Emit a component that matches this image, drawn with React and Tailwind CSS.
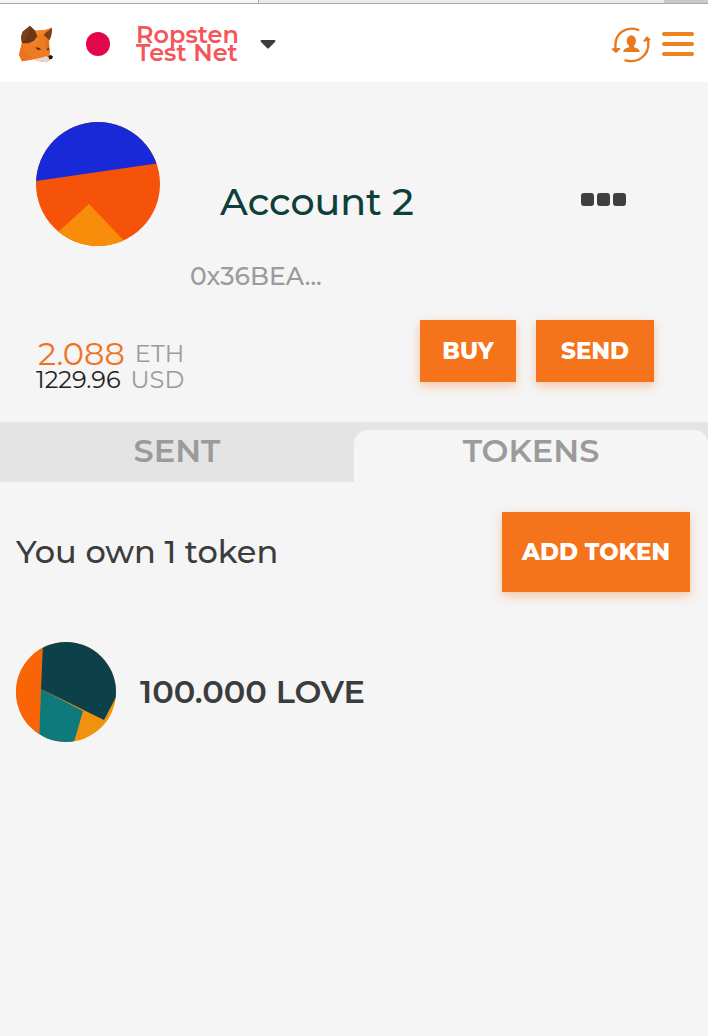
import React from "react";

const FoxLogo = () => (
  <svg viewBox="0 0 126 132" className="h-11 w-[42px]" aria-hidden="true">
    <path d="M42 12 L56 26 L88 24 L108 17 L107 34 L101 52 L98 64 L101 96 L105 110 L92 121 L70 118 L52 112 L18 118 L9 98 L18 62 Z" fill="#ee7b20" />
    <path d="M18 62 L9 98 L18 118 L52 112 L38 98 L22 82 Z" fill="#ea731d" />
    <path d="M56 26 L88 24 L82 38 L64 42 Z" fill="#f28429" />
    <path d="M38 62 L62 46 L74 60 L58 76 Z" fill="#f08025" />
    <path d="M42 11 L56 25 L64 43 L54 56 L38 64 L18 64 L15 46 L20 29 Z" fill="#6a3614" />
    <path d="M42 11 L38 36 L18 64 L15 46 L20 29 Z" fill="#784118" />
    <path d="M108 17 L95 25 L83 39 L100 55 L105 44 L107 33 Z" fill="#7c3e18" />
    <path d="M108 17 L88 24 L84 36 L97 27 Z" fill="#e2742a" />
    <path d="M88 54 L99 60 L102 95 L91 82 Z" fill="#e26c1d" />
    <path d="M59 75 L72 79 L75 84 L63 83 Z" fill="#5a3018" />
    <path d="M92 81 L99 77 L99 83 L94 85 Z" fill="#5a3018" />
    <path d="M52 112 L72 108 L90 103 L103 109 L92 121 L70 118 Z" fill="#e3d9d2" />
    <path d="M97 103 L104 99 L111 103 L108 111 L100 112 Z" fill="#191919" />
  </svg>
);

const SwitchAccountIcon = () => (
  <svg viewBox="0 0 138 126" className="h-[42px] w-[46px]" fill="none" aria-hidden="true">
    <g stroke="#e8791f" strokeWidth="7" strokeLinecap="round">
      <path d="M91 21 C57 8 22 29 22 68 L23 78" />
      <path d="M52 112 C88 122 124 99 121 57 L119 50" />
    </g>
    <g fill="#e8791f" stroke="#e8791f" strokeWidth="4" strokeLinejoin="round">
      <path d="M13 78 L35 77 L24 88 Z" />
      <path d="M108 54 L116 42 L126 50 Z" />
    </g>
    <g fill="#e8791f">
      <ellipse cx="70" cy="54" rx="14" ry="17" />
      <path d="M63 64 H78 V73 C86 76 95 77 95 87 H46 C46 77 55 76 63 73 Z" />
    </g>
  </svg>
);

const AccountIdenticon = () => (
  <svg viewBox="0 0 124 124" className="size-[124px] shrink-0 rounded-full" aria-hidden="true">
    <rect width="124" height="124" fill="#f6530a" />
    <path d="M0 0 H124 V41 L0 59 Z" fill="#1829d8" />
    <path d="M53 82 L10 121 V124 H93 Z" fill="#f78d09" />
  </svg>
);

const TokenIdenticon = () => (
  <svg viewBox="0 0 100 100" className="size-[100px] shrink-0 rounded-full" aria-hidden="true">
    <rect width="100" height="100" fill="#f0920d" />
    <path d="M0 0 H27 L23 100 H0 Z" fill="#f96506" />
    <path d="M25 47 L67 69 L58 100 H23 Z" fill="#0f7a7b" />
    <path d="M27 0 H100 V55 L88 78 L25 47 Z" fill="#0c414b" />
  </svg>
);

const buttonStyle =
  "bg-[#f5731b] text-[23px] font-extrabold text-white shadow-[0_4px_10px_rgba(247,115,27,0.36)]";

const App = () => {
  return (
    <div className="min-h-screen bg-[#f5f5f5] font-['Montserrat','Inter',sans-serif] text-[#3b3c3c]">
      {/* Window edge */}
      <div className="flex h-1 border-b border-[#a9a9a9] bg-[#ececec]">
        <div className="w-[259px] border-r border-[#a9a9a9] bg-[#f5f5f5]" />
        <div className="ml-auto w-11 bg-[#c9c9c9]" />
      </div>

      <header className="flex h-[78px] items-center bg-white pt-[2px] pr-[14px] pl-4">
        <FoxLogo />
        <button type="button" className="ml-7 flex items-center text-left">
          <span className="size-6 rounded-full bg-[#e2064a]" />
          <span className="ml-[26px] w-[106px] text-2xl/[18px] font-semibold text-[#f5555a]">
            Ropsten Test Net
          </span>
          <svg viewBox="0 0 16 9" className="ml-[18px] h-[9px] w-4" aria-hidden="true">
            <path d="M1 0 H15 Q16 1 15 2 L9 8 Q8 9 7 8 L1 2 Q0 1 1 0 Z" fill="#3c3c3c" />
          </svg>
        </button>
        <button type="button" aria-label="Switch account" className="ml-auto">
          <SwitchAccountIcon />
        </button>
        <button type="button" aria-label="Menu" className="ml-2 flex w-8 flex-col gap-[6px]">
          <span className="h-1 rounded-full bg-[#f0811c]" />
          <span className="h-1 rounded-full bg-[#f0811c]" />
          <span className="h-1 rounded-full bg-[#f0811c]" />
        </button>
      </header>

      <main>
        <section className="pt-10 pr-[54px] pb-[29px] pl-9">
          <div className="flex items-start">
            <AccountIdenticon />
            <div className="ml-[30px] pt-14">
              <h1 className="pl-[30px] text-[38px]/[48px] font-medium text-[#0d4038]">Account 2</h1>
              <p className="mt-[34px] text-[25px]/[32px] font-medium text-[#9b9b9b]">0x36BEA...</p>
            </div>
            <button type="button" aria-label="Account options" className="mt-[71px] mr-7 ml-auto flex gap-[3px]">
              <span className="size-[13px] rounded-[3px] bg-[#3f3f3f]" />
              <span className="size-[13px] rounded-[3px] bg-[#3f3f3f]" />
              <span className="size-[13px] rounded-[3px] bg-[#3f3f3f]" />
            </button>
          </div>

          <div className="mt-7 flex items-start justify-between">
            <div className="pt-[21px]">
              <p className="flex items-center justify-end gap-[10px] text-2xl/[26px] text-[#9b9b9b]">
                <span className="text-[32px]/[26px] text-[#ee7423]">2.088</span>ETH
              </p>
              <p className="flex items-center justify-end gap-[10px] text-2xl/[26px] text-[#9b9b9b]">
                <span className="text-[#222]">1229.96</span>USD
              </p>
            </div>
            <div className="flex gap-5">
              <button type="button" className={`${buttonStyle} h-[62px] w-24`}>BUY</button>
              <button type="button" className={`${buttonStyle} h-[62px] w-[118px]`}>SEND</button>
            </div>
          </div>
        </section>

        <nav className="grid h-[60px] grid-cols-2 bg-[#e4e4e4] pt-2 text-[32px]/[42px] font-semibold text-[#9b9b9b]">
          <button type="button" className="flex justify-center">SENT</button>
          <button type="button" className="flex justify-center rounded-t-[14px] bg-[#f5f5f5]">TOKENS</button>
        </nav>

        <section className="pt-[30px] pr-[18px] pl-4">
          <div className="flex items-center justify-between">
            <h2 className="text-[32px]/[40px] font-medium">You own 1 token</h2>
            <button type="button" className={`${buttonStyle} h-20 w-[188px]`}>ADD TOKEN</button>
          </div>
          <ul className="mt-[50px]">
            <li className="flex items-center gap-6">
              <TokenIdenticon />
              <h3 className="text-[32px]/[40px] font-semibold">100.000 LOVE</h3>
            </li>
          </ul>
        </section>
      </main>
    </div>
  );
};

export default App;
